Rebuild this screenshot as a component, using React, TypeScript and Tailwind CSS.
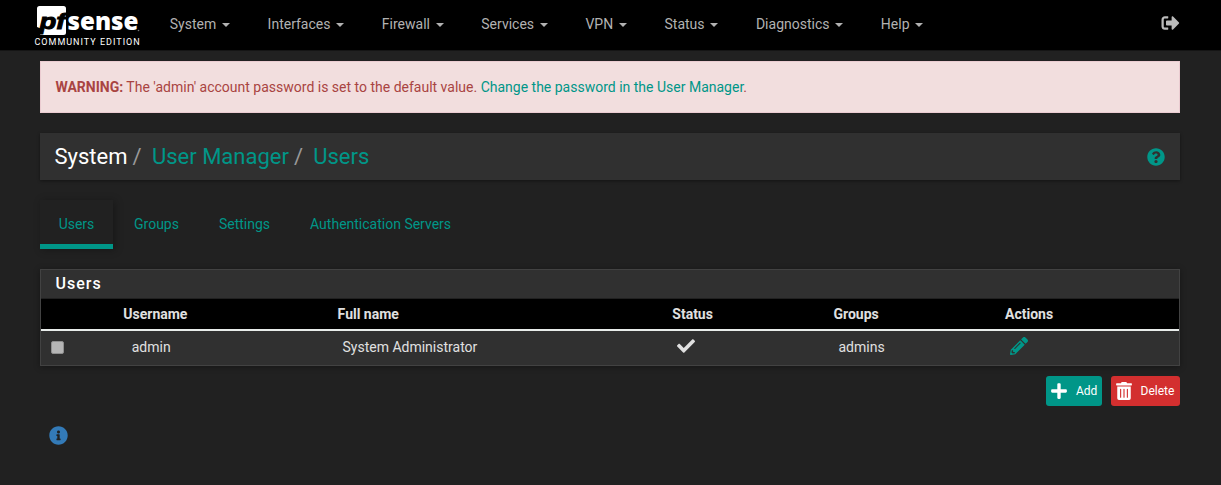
import {
  FaCheck,
  FaInfoCircle,
  FaPencilAlt,
  FaPlus,
  FaQuestionCircle,
  FaSignOutAlt,
  FaTrashAlt,
} from "react-icons/fa";

const menus = ["System", "Interfaces", "Firewall", "Services", "VPN", "Status", "Diagnostics", "Help"];
const tabs = ["Groups", "Settings", "Authentication Servers"];

function Logo() {
  return (
    <div className="ml-[34px] w-[107px] pt-[5px]">
      <svg width="107" height="31" viewBox="0 0 107 31" className="block overflow-visible">
        <path d="M5.500 1H29.500Q32 1 32 3.500V27.500Q32 30 29.500 30H6L8 24L3 22V3.500Q3 1 5.500 1Z" fill="#fff" />
        <text x="5.500" y="23.500" fontFamily="Liberation Sans" fontWeight="700" fontStyle="italic" fontSize="22.500" textLength="26" lengthAdjust="spacingAndGlyphs" fill="#000" stroke="#000" strokeWidth="1">pf</text>
        <text x="33.500" y="24.500" fontFamily="Open Sans" fontWeight="800" fontSize="25" textLength="71" lengthAdjust="spacingAndGlyphs" fill="#fff">sense</text>
        <circle cx="104.500" cy="25.500" r="0.800" fill="#777" />
      </svg>
      <div className="mt-px whitespace-nowrap pl-[0.5px] text-[9px] leading-[11px] tracking-[1px] text-white">COMMUNITY EDITION</div>
    </div>
  );
}

export default function App() {
  return (
    <div className="h-[485px] w-[1221px] overflow-hidden bg-[#212121] font-['Roboto',sans-serif] text-[14px] leading-[20px] text-[#e0e0e0]">
      <nav className="flex h-[51px] border-b border-[#151515] bg-black text-[#b2b2b2]">
        <Logo />
        <div className="ml-[10.1px] flex pt-[14px]">
          {menus.map((m) => (
            <div key={m} className="flex h-5 items-center px-[18.7px]">
              {m}
              <span className="ml-[5.8px] mr-[0.2px] mt-[2px] border-x-4 border-t-4 border-x-transparent border-t-[#b2b2b2]" />
            </div>
          ))}
        </div>
        <FaSignOutAlt className="ml-auto mr-[41px] mt-[14px] h-[18px] w-[19px] text-[#bbb]" />
      </nav>
      <main className="mx-10 w-[1140px] pt-[10px]">
        <div className="h-[52px] border border-[#ebccd1] bg-[#f2dede] px-[14.5px] py-[15px] text-[#a94442]">
          <b>WARNING:</b> The 'admin' account password is set to the default value.{" "}
          <span className="text-[#009688]">Change the password in the User Manager</span>.
        </div>
        <header className="mt-5 flex h-[47px] items-center bg-[#303030] pl-[14.5px] pr-[15.5px] text-[22px] shadow-[0_1px_3px_rgba(0,0,0,0.4)]">
          <span className="text-white">System</span>
          <span className="ml-[5px] text-[#999]">/</span>
          <span className="ml-[10.4px] text-[#009688]">User Manager</span>
          <span className="ml-[5px] text-[#999]">/</span>
          <span className="ml-[10.2px] text-[#009688]">Users</span>
          <FaQuestionCircle className="ml-auto size-[18px] text-[#009688]" />
        </header>
        <div className="mt-5 flex h-[49px] text-[#009688]">
          <div className="h-[49px] w-[73px] border-b-[5px] border-[#009688] pt-[14px] text-center shadow-[2px_1px_8px_rgba(0,0,0,0.3)]">Users</div>
          <div className="flex gap-10 pl-[21px] pt-[14px]">
            {tabs.map((t) => (
              <span key={t}>{t}</span>
            ))}
          </div>
        </div>
        <section className="mt-5 h-[97px] border border-[#424242] bg-[#303030] shadow-[0_1px_6px_rgba(0,0,0,0.35)]">
          <h2 className="h-[29px] border-b border-[#212121] pl-[14.5px] text-[16px] font-medium leading-[28px] tracking-[1px] text-white">Users</h2>
          <div className="grid h-[32px] grid-cols-[82.3px_214.3px_334.7px_161.2px_171.6px_1fr] border-b-2 border-[#e8ecea] bg-black font-bold leading-[30px]">
            <span />
            <span>Username</span>
            <span>Full name</span>
            <span>Status</span>
            <span>Groups</span>
            <span>Actions</span>
          </div>
          <div className="grid h-[34px] grid-cols-[90.7px_210.8px_334.5px_161.5px_171.5px_1fr] items-center pb-[2px]">
            <span className="ml-[10px] size-[13px] rounded-[2px] border border-[#8e8e8e] bg-[#b5b5b5]" />
            <span>admin</span>
            <span>System Administrator</span>
            <FaCheck className="mb-[2px] size-[18px]" />
            <span>admins</span>
            <FaPencilAlt className="mb-[2px] size-[18px] text-[#009688]" />
          </div>
        </section>
        <div className="mt-[10px] flex justify-end gap-[9px] text-[12px] text-white">
          <button className="flex h-[30px] w-[56px] items-center rounded-[3px] bg-[#009688] pl-[4px]">
            <FaPlus className="size-[18px]" />
            <span className="ml-[8px]">Add</span>
          </button>
          <button className="flex h-[30px] w-[69px] items-center rounded-[3px] bg-[#d32f2f] pl-[5px]">
            <FaTrashAlt className="h-[18px] w-[16px]" />
            <span className="ml-[8.5px]">Delete</span>
          </button>
        </div>
        <FaInfoCircle className="ml-[9.3px] mt-5 size-[19px] text-[#337ab7]" />
      </main>
    </div>
  );
}
